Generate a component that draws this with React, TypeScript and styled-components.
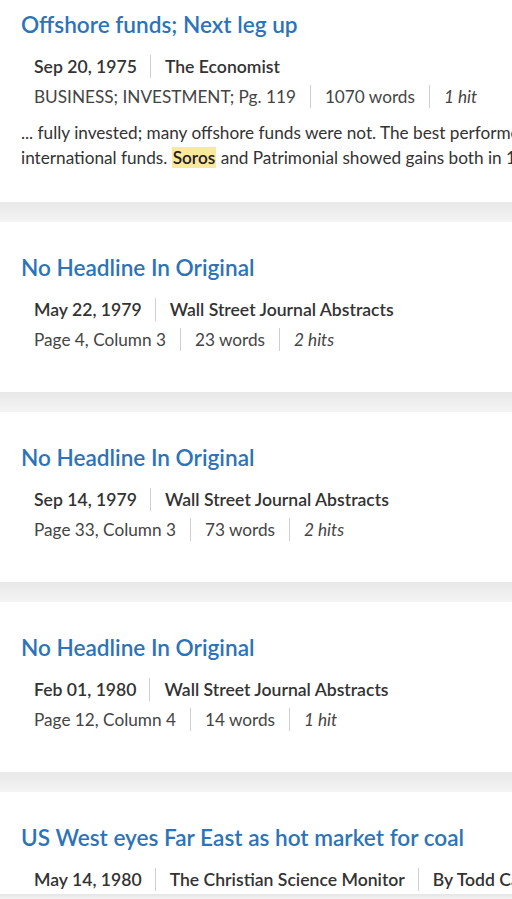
import React from "react";
import styled, { createGlobalStyle } from "styled-components";

const Global = createGlobalStyle`
  html, body { margin: 0; padding: 0; background: #ffffff; }
  body { font-family: Lato, "Open Sans", sans-serif; color: #333; overflow: hidden; height: 899px; }
`;

const List = styled.div`
  margin-top: -21px;
  display: flex;
  flex-direction: column;
`;

const Card = styled.article<{ $snippet?: boolean }>`
  background: #fff;
  padding: 31px 0 ${(p) => (p.$snippet ? "32px" : "38px")} 21px;
  white-space: nowrap;
  overflow: hidden;
`;

const Gap = styled.div`
  height: 20px;
  background: linear-gradient(#e8e8e8, #f4f4f4);
`;

const Title = styled.a`
  display: block;
  font-size: 22.6px;
  line-height: 30px;
  font-weight: 600;
  color: #2d73b8;
  text-decoration: none;
  margin-bottom: 11px;
`;

const Meta = styled.div`
  padding-left: 13px;
  display: flex;
  flex-direction: column;
`;

const Row = styled.div`
  display: flex;
  align-items: center;
  height: 30px;
`;

const Item = styled.span<{ $bold?: boolean; $italic?: boolean }>`
  font-size: ${(p) => (p.$bold ? "17.6px" : "17.2px")};
  color: ${(p) => (p.$bold ? "#333" : "#444")};
  font-weight: ${(p) => (p.$bold ? 600 : 400)};
  font-style: ${(p) => (p.$italic ? "italic" : "normal")};
  padding: 0 ${(p) => (p.$bold ? "13px" : "14px")} 0 14px;
  border-left: 1px solid #cfcfcf;
  line-height: 23px;
  &:first-child {
    padding-left: 0;
    border-left: none;
  }
`;

const Snippet = styled.p`
  margin: 9px 0 0;
  font-size: 17.2px;
  line-height: 25px;
  color: #333;
`;

const Hit = styled.mark`
  background: #fbe99b;
  color: #222;
  font-weight: 600;
  padding: 0 1px;
`;

const BottomShade = styled.div`
  position: fixed;
  left: 0;
  right: 0;
  bottom: 0;
  height: 5px;
  background: linear-gradient(#e4e4e4, #f3f3f3);
`;

type Doc = {
  title: string;
  row1: string[];
  row2?: string[];
  hits?: string;
  snippet?: boolean;
};

const docs: Doc[] = [
  {
    title: "Offshore funds; Next leg up",
    row1: ["Sep 20, 1975", "The Economist"],
    row2: ["BUSINESS; INVESTMENT; Pg. 119", "1070 words"],
    hits: "1 hit",
    snippet: true,
  },
  {
    title: "No Headline In Original",
    row1: ["May 22, 1979", "Wall Street Journal Abstracts"],
    row2: ["Page 4, Column 3", "23 words"],
    hits: "2 hits",
  },
  {
    title: "No Headline In Original",
    row1: ["Sep 14, 1979", "Wall Street Journal Abstracts"],
    row2: ["Page 33, Column 3", "73 words"],
    hits: "2 hits",
  },
  {
    title: "No Headline In Original",
    row1: ["Feb 01, 1980", "Wall Street Journal Abstracts"],
    row2: ["Page 12, Column 4", "14 words"],
    hits: "1 hit",
  },
  {
    title: "US West eyes Far East as hot market for coal",
    row1: ["May 14, 1980", "The Christian Science Monitor", "By Todd Carrel"],
    row2: ["Page 11", "640 words"],
    hits: "1 hit",
  },
];

export default function App() {
  return (
    <>
      <Global />
      <List>
        {docs.map((d, i) => (
          <React.Fragment key={i}>
            {i > 0 && <Gap />}
            <Card $snippet={d.snippet}>
              <Title href="#">{d.title}</Title>
              <Meta>
                <Row>
                  {d.row1.map((t) => (
                    <Item key={t} $bold>
                      {t}
                    </Item>
                  ))}
                </Row>
                {d.row2 && (
                  <Row>
                    {d.row2.map((t) => (
                      <Item key={t}>{t}</Item>
                    ))}
                    {d.hits && <Item $italic>{d.hits}</Item>}
                  </Row>
                )}
              </Meta>
              {d.snippet && (
                <Snippet>
                  ... fully invested; many offshore funds were not. The best performers were
                  <br />
                  international funds. <Hit>Soros</Hit> and Patrimonial showed gains both in 1974
                </Snippet>
              )}
            </Card>
          </React.Fragment>
        ))}
      </List>
      <BottomShade />
    </>
  );
}
